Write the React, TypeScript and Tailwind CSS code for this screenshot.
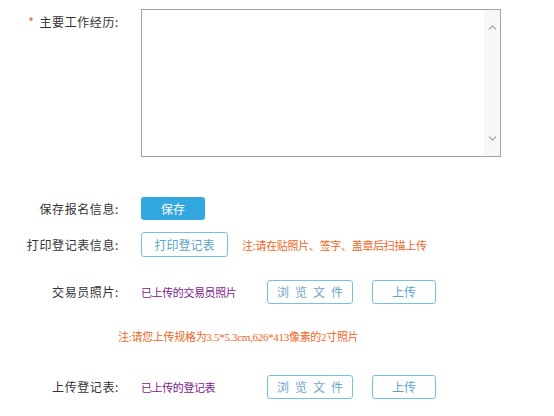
import React from 'react';
import { ChevronUp, ChevronDown } from 'lucide-react';

const font = { fontFamily: '"Noto Sans CJK SC", "Noto Sans", sans-serif' };

const Label: React.FC<{ children: React.ReactNode; required?: boolean }> = ({ children, required }) => (
  <div className="w-[119px] shrink-0 text-right text-[12px] leading-[16px] tracking-[0.6px] text-[#333]">
    {required && <span className="mr-[5px] text-[#e8603c]">*</span>}
    {children}
  </div>
);

const OutlineButton: React.FC<{ children: React.ReactNode; className?: string }> = ({ children, className }) => (
  <button
    className={`h-[24px] rounded-[3px] border border-[#74c2e4] bg-white text-[12px] leading-none text-[#5aa4cf] ${className ?? ''}`}
  >
    {children}
  </button>
);

const UploadRow: React.FC<{ label: string; uploaded: string }> = ({ label, uploaded }) => (
  <div className="flex items-center">
    <Label>{label}</Label>
    <div className="ml-[22px] w-[126px] text-[11px] leading-[16px] tracking-[-0.4px] text-[#7d1a8c]">{uploaded}</div>
    <OutlineButton className="w-[86px] tracking-[6px] pl-[6px] text-[#6aa6cc]">浏览文件</OutlineButton>
    <OutlineButton className="ml-[19px] w-[64px]">上传</OutlineButton>
  </div>
);

export default function App() {
  return (
    <div className="min-h-screen w-[554px] bg-white pt-[9px]" style={font}>
      <div className="flex">
        <div className="pt-[5px]">
          <Label required>主要工作经历:</Label>
        </div>
        <div className="ml-[22px] flex h-[148px] w-[360px] border border-[#a3a3a3] bg-white">
          <textarea className="h-full flex-1 resize-none p-1 text-[12px] outline-none" />
          <div className="flex w-[16px] flex-col items-center justify-between bg-[#f7f7f7] py-[11px] text-[#a0a0a0]">
            <ChevronUp size={13} strokeWidth={2} />
            <ChevronDown size={13} strokeWidth={2} />
          </div>
        </div>
      </div>

      <div className="mt-[40px] flex items-center">
        <Label>保存报名信息:</Label>
        <button className="ml-[22px] h-[23px] w-[64px] rounded-[3px] bg-[#33a7e0] text-[12px] leading-none text-white">
          保存
        </button>
      </div>

      <div className="mt-[12px] flex items-center">
        <Label>打印登记表信息:</Label>
        <OutlineButton className="ml-[22px] h-[25px] w-[87px]">打印登记表</OutlineButton>
        <span className="ml-[14px] text-[11px] leading-[16px] tracking-[-0.3px] text-[#f0641e]">
          注:请在贴照片、签字、盖章后扫描上传
        </span>
      </div>

      <div className="mt-[23px]">
        <UploadRow label="交易员照片:" uploaded="已上传的交易员照片" />
      </div>

      <div
        className="ml-[118px] mt-[25px] text-[11px] leading-[16px] tracking-[-0.3px] text-[#f0641e]"
        style={{ fontFamily: '"Liberation Serif", "Noto Sans CJK SC", serif' }}
      >
        注:请您上传规格为3.5*5.3cm,626*413像素的2寸照片
      </div>

      <div className="mt-[30px]">
        <UploadRow label="上传登记表:" uploaded="已上传的登记表" />
      </div>
    </div>
  );
}
